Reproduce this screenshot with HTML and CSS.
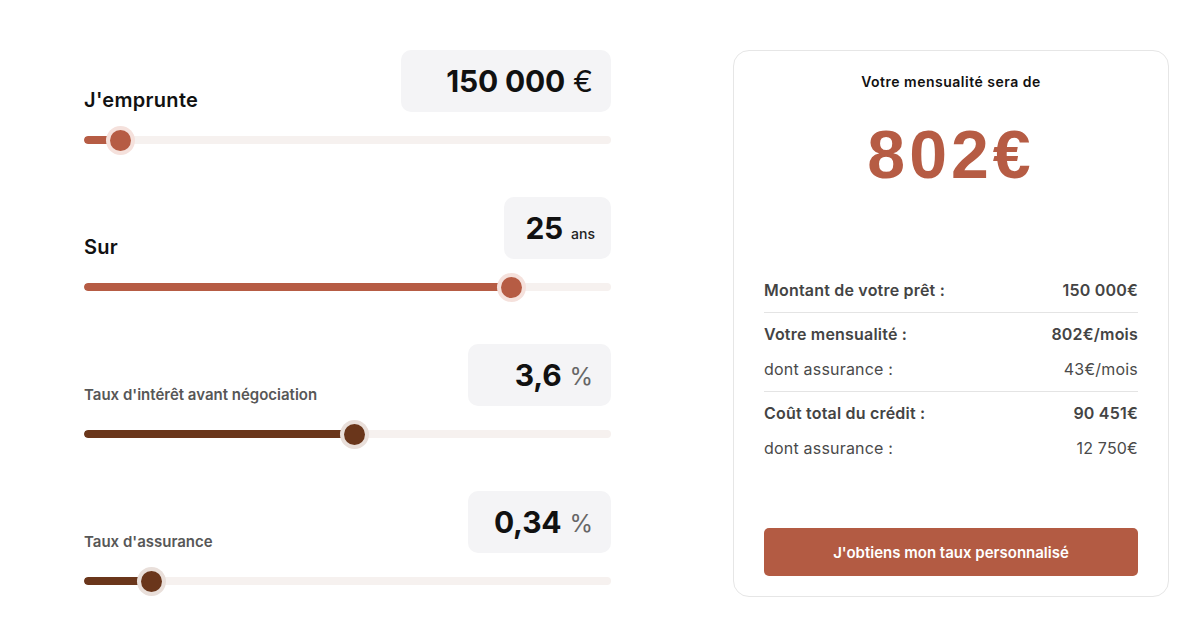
FILE: index.html
```html
<!DOCTYPE html>
<html lang="fr">
<head>
<meta charset="utf-8">
<title>Simulateur</title>
<link rel="stylesheet" href="styles.css">
</head>
<body>
<div class="page">
  <div class="controls">
    <div class="field">
      <div class="field-head">
        <div class="label big">J'emprunte</div>
        <div class="value-box w-amount"><span class="num">150 000</span><span class="unit euro">€</span></div>
      </div>
      <div class="slider">
        <div class="track"><div class="fill red" style="width:36px"></div></div>
        <div class="thumb red" style="left:36px"></div>
      </div>
    </div>
    <div class="field">
      <div class="field-head">
        <div class="label big">Sur</div>
        <div class="value-box w-years"><span class="num">25</span><span class="unit ans">ans</span></div>
      </div>
      <div class="slider">
        <div class="track"><div class="fill red" style="width:427px"></div></div>
        <div class="thumb red" style="left:427px"></div>
      </div>
    </div>
    <div class="field">
      <div class="field-head">
        <div class="label small">Taux d'intérêt avant négociation</div>
        <div class="value-box w-rate"><span class="num">3,6</span><span class="unit pct">%</span></div>
      </div>
      <div class="slider">
        <div class="track"><div class="fill brown" style="width:270px"></div></div>
        <div class="thumb brown" style="left:270px"></div>
      </div>
    </div>
    <div class="field">
      <div class="field-head">
        <div class="label small">Taux d'assurance</div>
        <div class="value-box w-rate"><span class="num">0,34</span><span class="unit pct">%</span></div>
      </div>
      <div class="slider">
        <div class="track"><div class="fill brown" style="width:67px"></div></div>
        <div class="thumb brown" style="left:67px"></div>
      </div>
    </div>
  </div>

  <div class="card">
    <div class="card-title">Votre mensualité sera de</div>
    <div class="big-amount">802€</div>
    <div class="group">
      <div class="row strong"><span>Montant de votre prêt :</span><span>150 000€</span></div>
    </div>
    <div class="group">
      <div class="row strong"><span>Votre mensualité :</span><span>802€/mois</span></div>
      <div class="row light"><span>dont assurance :</span><span>43€/mois</span></div>
    </div>
    <div class="group last">
      <div class="row strong"><span>Coût total du crédit :</span><span>90 451€</span></div>
      <div class="row light"><span>dont assurance :</span><span>12 750€</span></div>
    </div>
    <button class="cta">J'obtiens mon taux personnalisé</button>
  </div>
</div>
</body>
</html>
```

FILE: styles.css
```css
* { box-sizing: border-box; }
html, body { margin: 0; padding: 0; background: #ffffff; }
body {
  font-family: Inter, "Noto Sans", "DejaVu Sans", sans-serif;
  color: #111;
}
.page {
  display: flex;
  align-items: flex-start;
  gap: 122px;
  padding: 50px 0 0 84px;
  width: 1200px;
  height: 632px;
}
.controls {
  width: 527px;
  display: flex;
  flex-direction: column;
  gap: 29px;
}
.field-head {
  display: flex;
  justify-content: space-between;
  align-items: flex-end;
  height: 62px;
}
.label { font-weight: 600; }
.label.big { font-size: 20px; color: #111; letter-spacing: 0.3px; }
.label.small { font-size: 15px; color: #575757; padding-bottom: 2px; }
.value-box {
  height: 62px;
  background: #f4f4f6;
  border-radius: 10px;
  display: flex;
  align-items: center;
  justify-content: flex-end;
  padding: 0 18px 0 0;
  gap: 8px;
}
.w-amount { width: 210px; }
.w-years { width: 107px; padding-right: 16px; }
.w-rate { width: 143px; }
.num { font-size: 30px; font-weight: 700; color: #111; letter-spacing: -0.2px; }
.unit.euro { font-size: 30px; font-weight: 400; color: #111; }
.unit.ans { font-size: 14px; font-weight: 500; color: #222; padding-top: 10px; }
.unit.pct { font-size: 24px; font-weight: 400; color: #666; padding-top: 2px; }
.slider {
  position: relative;
  height: 56px;
  display: flex;
  align-items: center;
}
.track {
  width: 100%;
  height: 8px;
  border-radius: 4px;
  background: #f6f1ef;
  overflow: hidden;
}
.fill { height: 100%; border-radius: 4px; }
.fill.red { background: #b65c44; }
.fill.brown { background: #6a361b; }
.thumb {
  position: absolute;
  top: 50%;
  width: 21px;
  height: 21px;
  margin: -10.5px 0 0 -10.5px;
  border-radius: 50%;
}
.thumb.red { background: #b65c44; box-shadow: 0 0 0 4px #f5e1dc; }
.thumb.brown { background: #6a361b; box-shadow: 0 0 0 4px #e9dfda; }

.card {
  width: 436px;
  height: 547px;
  border: 1px solid #e6e6e6;
  border-radius: 16px;
  padding: 21px 30px 20px 30px;
  display: flex;
  flex-direction: column;
}
.card-title {
  text-align: center;
  font-size: 14px;
  font-weight: 600;
  line-height: 20px;
  letter-spacing: 0.5px;
  color: #111;
}
.big-amount {
  text-align: center;
  font-family: "Liberation Sans", Arial, sans-serif;
  font-weight: 700;
  font-size: 68px;
  line-height: 80px;
  letter-spacing: 4px;
  color: #b65c44;
  margin-top: 22px;
}
.group {
  display: flex;
  flex-direction: column;
  gap: 11px;
  padding: 9px 0 10px;
  border-bottom: 1px solid #e4e4e4;
}
.big-amount + .group { margin-top: 75px; }
.group.last { border-bottom: none; }
.row {
  display: flex;
  justify-content: space-between;
  font-size: 16px;
  line-height: 24px;
  color: #444;
}
.row.strong { font-weight: 600; letter-spacing: 0.2px; }
.row.light { font-weight: 400; color: #4a4a4a; letter-spacing: 0.2px; }
.cta {
  margin-top: auto;
  height: 48px;
  width: 100%;
  border: none;
  border-radius: 5px;
  background: #b35b43;
  color: #fff;
  font-family: Inter, "Noto Sans", sans-serif;
  font-size: 15px;
  font-weight: 600;
}
```
